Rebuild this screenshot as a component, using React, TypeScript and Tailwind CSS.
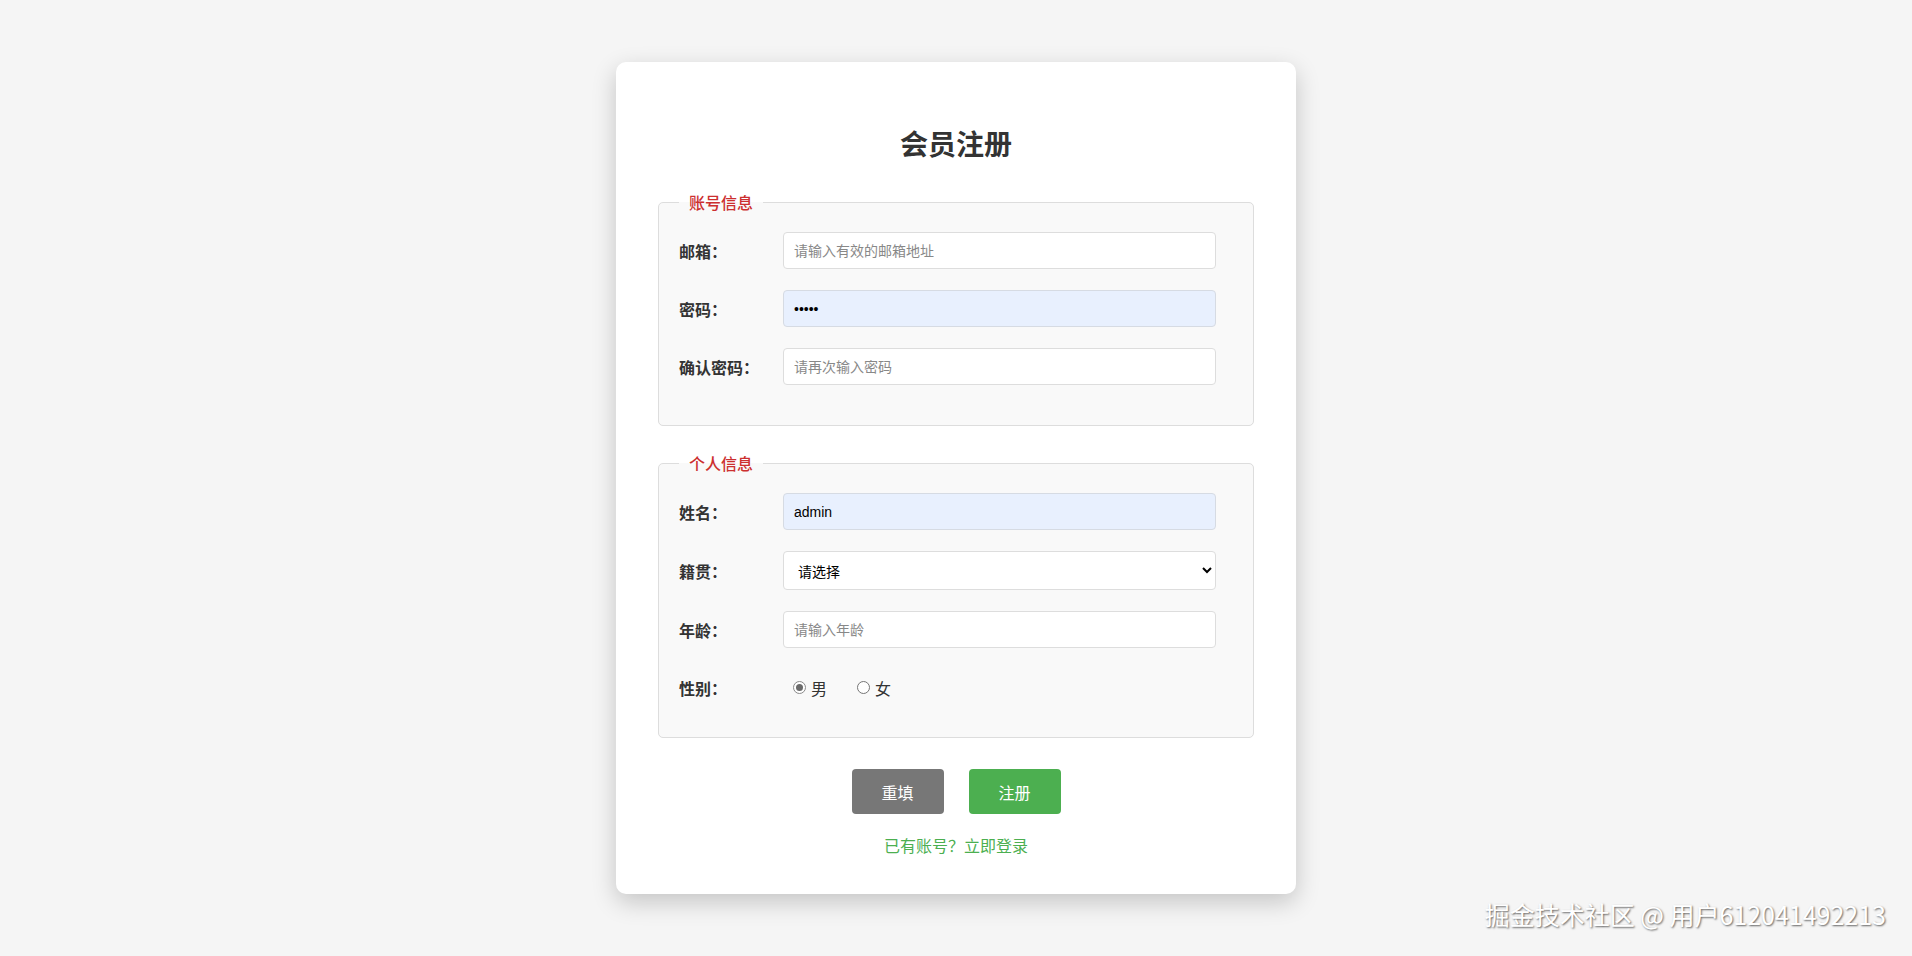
import React from 'react';

const font = "font-['Noto_Sans_CJK_SC','Noto_Sans',sans-serif]";

function Row({ label, children, h = 'h-[37px]' }: { label: string; children: React.ReactNode; h?: string }) {
  return (
    <div className={`flex items-center ${h}`}>
      <label className="w-[104px] shrink-0 text-[16px] font-bold text-[#333]">{label}</label>
      {children}
    </div>
  );
}

const inputCls =
  "w-[433px] h-full rounded-[4px] border border-[#ddd] bg-white px-[10px] text-[14px] text-black outline-none placeholder:text-[#888] font-['Liberation_Sans','Noto_Sans_CJK_SC',sans-serif]";
const filledCls =
  "w-[433px] h-full rounded-[4px] border border-[#d6dbe3] bg-[#e8f0fe] px-[10px] text-[14px] text-black outline-none font-['Liberation_Sans','Noto_Sans_CJK_SC',sans-serif]";

function Radio({ checked, label }: { checked?: boolean; label: string }) {
  return (
    <span className="flex items-center">
      <span className={`flex h-[13px] w-[13px] items-center justify-center rounded-full border bg-white ${checked ? 'border-[#8a8a8a]' : 'border-[#767676]'}`}>
        {checked && <span className="h-[7px] w-[7px] rounded-full bg-[#6b6b6b]" />}
      </span>
      <span className="ml-[5px] text-[16px] text-[#333]">{label}</span>
    </span>
  );
}

export default function App() {
  return (
    <div className={`relative flex min-h-screen items-center justify-center bg-[#f5f5f5] ${font}`}>
      <div className="w-[680px] rounded-[10px] bg-white px-[42px] pt-[63px] pb-[37px] shadow-[0_8px_24px_rgba(0,0,0,0.2)]">
        <h2 className="text-center text-[28px] leading-9 font-bold text-[#333]">会员注册</h2>

        <fieldset className="mt-[29px] rounded-[5px] border border-[#ddd] bg-[#f9f9f9] px-5 pb-10">
          <legend className="px-[10px] text-[16px] leading-6 font-medium text-[#cc2f2f]">账号信息</legend>
          <div className="flex flex-col gap-[21px] pt-[18px]">
            <Row label="邮箱：">
              <input className={inputCls} placeholder="请输入有效的邮箱地址" />
            </Row>
            <Row label="密码：">
              <input type="password" className={filledCls} defaultValue="12345" />
            </Row>
            <Row label="确认密码：">
              <input type="password" className={inputCls} placeholder="请再次输入密码" />
            </Row>
          </div>
        </fieldset>

        <fieldset className="mt-[25px] rounded-[5px] border border-[#ddd] bg-[#f9f9f9] px-5 pb-[31px]">
          <legend className="px-[10px] text-[16px] leading-6 font-medium text-[#cc2f2f]">个人信息</legend>
          <div className="flex flex-col gap-[21px] pt-[18px]">
            <Row label="姓名：">
              <input className={filledCls} defaultValue="admin" />
            </Row>
            <Row label="籍贯：" h="h-[39px]">
              <select className="h-full w-[433px] rounded-[4px] border border-[#ddd] bg-white px-[10px] text-[14px] text-black outline-none" defaultValue="">
                <option value="">请选择</option>
                <option value="bj">北京</option>
                <option value="sh">上海</option>
              </select>
            </Row>
            <Row label="年龄：">
              <input className={inputCls} placeholder="请输入年龄" />
            </Row>
            <Row label="性别：">
              <div className="flex items-center gap-[30px] pl-[10px]">
                <Radio checked label="男" />
                <Radio label="女" />
              </div>
            </Row>
          </div>
        </fieldset>

        <div className="mt-[31px] flex justify-center gap-[25px]">
          <button className="h-[45px] w-[92px] rounded-[4px] bg-[#777] text-[16px] text-white">重填</button>
          <button className="h-[45px] w-[92px] rounded-[4px] bg-[#4caf50] text-[16px] text-white">注册</button>
        </div>
        <p className="mt-[19px] text-center text-[16px] leading-6 text-[#4caf50]">已有账号？立即登录</p>
      </div>

      <div className="absolute right-[26px] bottom-[23px] text-[25px] text-white [text-shadow:1px_1px_2px_rgba(0,0,0,0.6)]">
        掘金技术社区 @ 用户612041492213
      </div>
    </div>
  );
}
